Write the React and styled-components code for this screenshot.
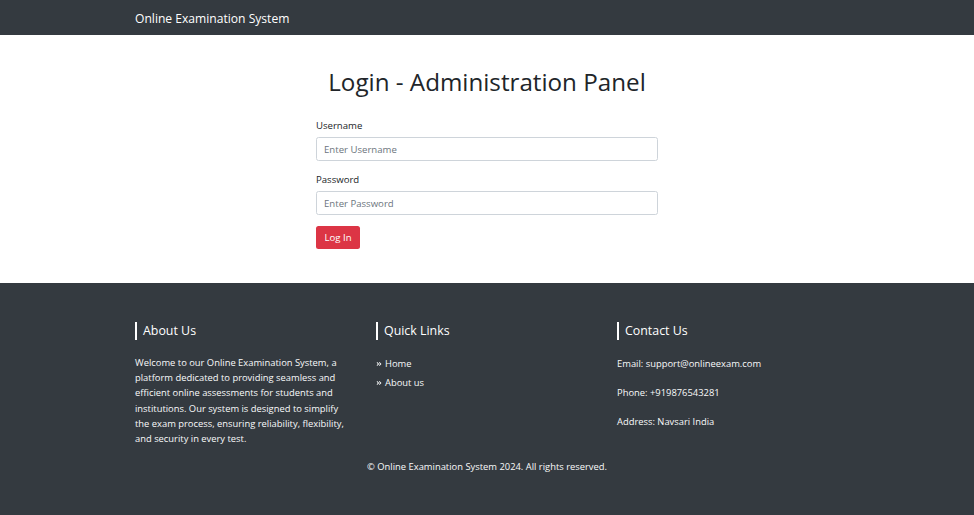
import React from 'react';
import styled, { createGlobalStyle } from 'styled-components';
import { FaAngleDoubleRight } from 'react-icons/fa';

const GlobalStyle = createGlobalStyle`
    body {
        margin: 0;
        font-family: "Open Sans", "Liberation Sans", sans-serif;
        color: #212529;
        background: #ffffff;
    }
    * {
        box-sizing: border-box;
    }
`;

const Navbar = styled.nav`
    height: 35px;
    background-color: #343a40;
    display: flex;
    align-items: center;
`;

const Container = styled.div`
    width: 704px;
    margin: 0 auto;
`;

const Brand = styled.a`
    color: #ffffff;
    font-size: 12.1px;
    line-height: 18px;
    text-decoration: none;
    display: block;
    padding-top: 2px;
`;

const Main = styled.main`
    height: 248px;
    padding-top: 32px;
`;

const Title = styled.h1`
    margin: 0 0 21px;
    text-align: center;
    font-size: 24.2px;
    line-height: 30px;
    font-weight: 400;
    color: #212529;
`;

const Form = styled.form`
    width: 342px;
    margin: 0 auto;
`;

const Group = styled.div`
    margin-bottom: 11px;
`;

const Label = styled.label`
    display: block;
    font-size: 9.6px;
    line-height: 15px;
    margin-bottom: 4px;
`;

const Input = styled.input`
    display: block;
    width: 100%;
    height: 24px;
    padding: 0 7px;
    font-family: inherit;
    font-size: 9.6px;
    color: #495057;
    border: 1px solid #ced4da;
    border-radius: 2.5px;
    background: #fff;
    &::placeholder {
        color: #6c757d;
    }
`;

const Button = styled.button`
    display: block;
    width: 44px;
    height: 23px;
    padding: 0;
    border: none;
    border-radius: 2.5px;
    background-color: #dc3545;
    color: #ffffff;
    font-family: inherit;
    font-size: 9.6px;
`;

const Footer = styled.footer`
    height: 232px;
    background-color: #343a40;
    color: #f8f9fa;
    padding-top: 39px;
`;

const Columns = styled.div`
    display: grid;
    grid-template-columns: 241px 241px 1fr;
`;

const Column = styled.div`
    padding-right: 22px;
`;

const Heading = styled.h5`
    margin: 0 0 ${p => p.$gap || 16}px;
    border-left: 2px solid #ffffff;
    padding-left: 6px;
    font-size: 12.4px;
    line-height: 18px;
    font-weight: 400;
    color: #ffffff;
`;

const Text = styled.p`
    margin: 0;
    font-size: 9.4px;
    line-height: 15.2px;
`;

const LinkList = styled.ul`
    list-style: none;
    margin: 0;
    padding: 0;
`;

const LinkItem = styled.li`
    display: flex;
    align-items: center;
    gap: 3px;
    font-size: 9.4px;
    line-height: 15.2px;
    margin-bottom: 4px;
    svg {
        width: 6px;
        height: 6px;
    }
`;

const ContactLine = styled.p`
    margin: 0 0 14px;
    font-size: 9.4px;
    line-height: 15.2px;
`;

const Copyright = styled.p`
    margin: 13px 0 0;
    text-align: center;
    font-size: 9.4px;
    line-height: 15.2px;
`;

const App = () => (
    <>
        <GlobalStyle />
        <Navbar>
            <Container>
                <Brand href="#">Online Examination System</Brand>
            </Container>
        </Navbar>
        <Main>
            <Title>Login - Administration Panel</Title>
            <Form onSubmit={e => e.preventDefault()}>
                <Group>
                    <Label>Username</Label>
                    <Input type="text" placeholder="Enter Username" />
                </Group>
                <Group>
                    <Label>Password</Label>
                    <Input type="password" placeholder="Enter Password" />
                </Group>
                <Button>Log In</Button>
            </Form>
        </Main>
        <Footer>
            <Container>
                <Columns>
                    <Column>
                        <Heading $gap={15}>About Us</Heading>
                        <Text>
                            Welcome to our Online Examination System, a platform dedicated to providing seamless and
                            efficient online assessments for students and institutions. Our system is designed to
                            simplify the exam process, ensuring reliability, flexibility, and security in every test.
                        </Text>
                    </Column>
                    <Column>
                        <Heading>Quick Links</Heading>
                        <LinkList>
                            <LinkItem><FaAngleDoubleRight />Home</LinkItem>
                            <LinkItem><FaAngleDoubleRight />About us</LinkItem>
                        </LinkList>
                    </Column>
                    <Column>
                        <Heading>Contact Us</Heading>
                        <ContactLine>Email: support@onlineexam.com</ContactLine>
                        <ContactLine>Phone: +919876543281</ContactLine>
                        <ContactLine>Address: Navsari India</ContactLine>
                    </Column>
                </Columns>
            </Container>
            <Copyright>© Online Examination System 2024. All rights reserved.</Copyright>
        </Footer>
    </>
);

export default App;
